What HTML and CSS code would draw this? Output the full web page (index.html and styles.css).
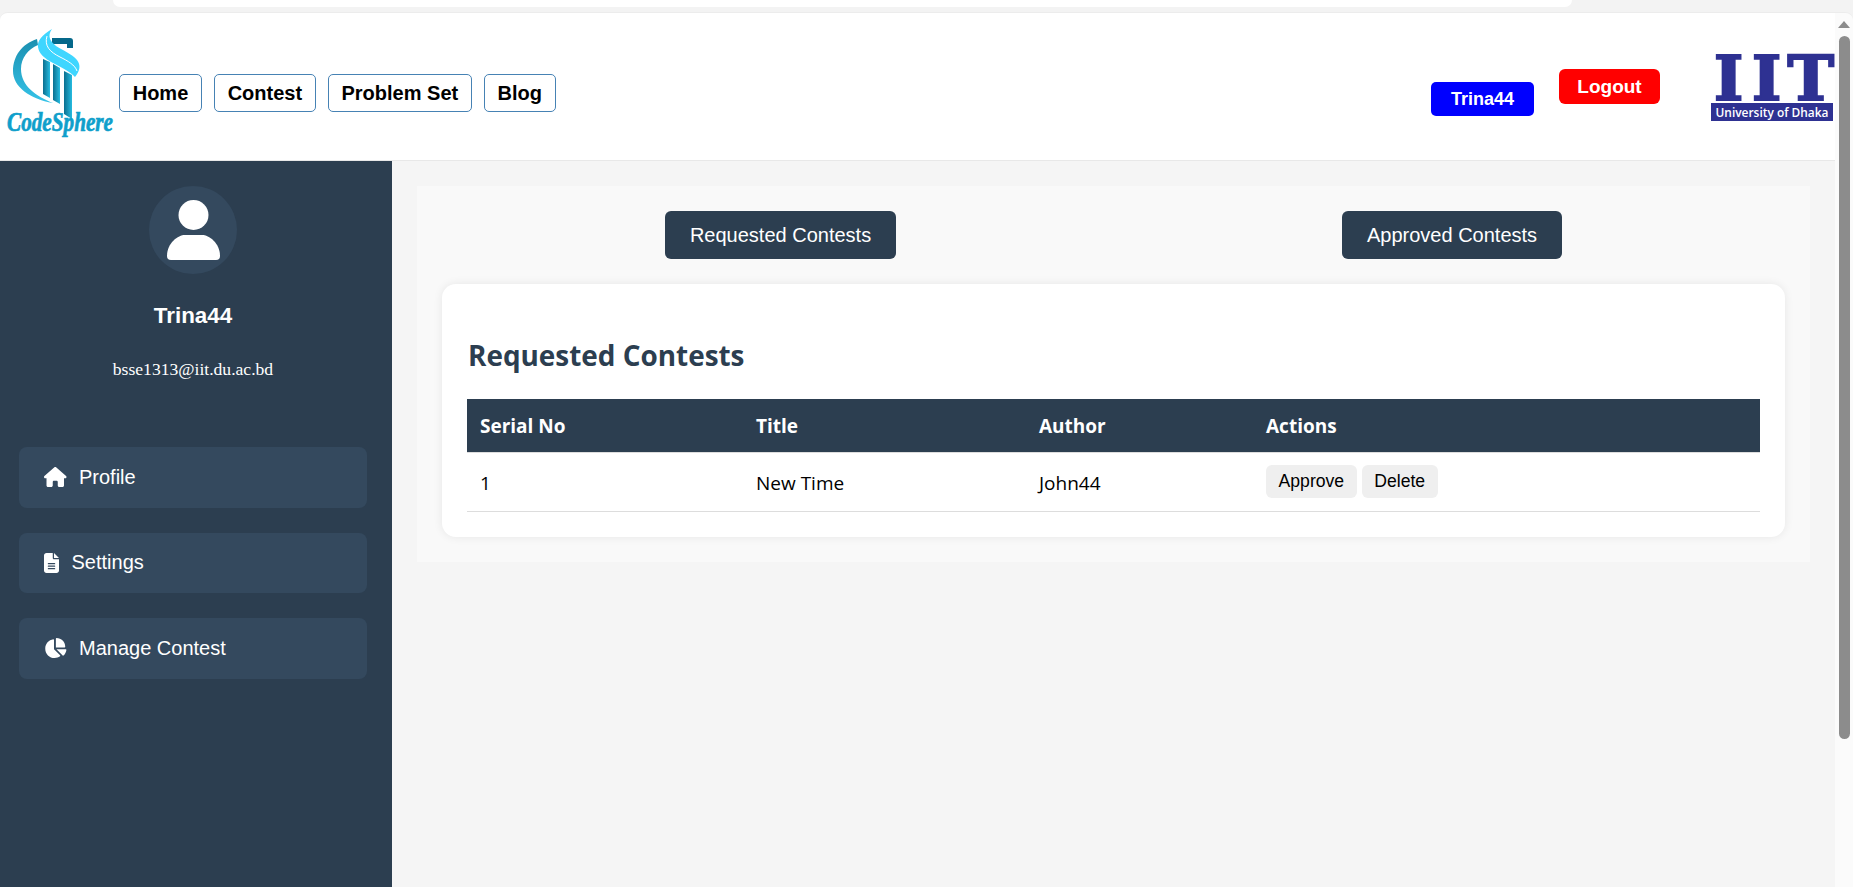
FILE: index.html
```html
<!DOCTYPE html>
<html lang="en">
<head>
    <meta charset="UTF-8">
    <meta name="viewport" content="width=device-width, initial-scale=1.0">
    <title>Manage Contest - CodeSphere</title>
    <link rel="stylesheet" href="styles.css">
</head>
<body>
    <div class="top-strip">
        <div class="top-pill"></div>
    </div>
    <div class="window">
        <div class="page">
            <header class="site-header">
                <svg class="logo" viewBox="0 0 114 125" aria-label="CodeSphere">
                    <defs>
                        <linearGradient id="ringGrad" x1="0" y1="0" x2="0" y2="1">
                            <stop offset="0" stop-color="#1b8fb0"/>
                            <stop offset="1" stop-color="#35c3e8"/>
                        </linearGradient>
                        <linearGradient id="colGrad" x1="0" y1="0" x2="1" y2="0">
                            <stop offset="0" stop-color="#0b6f8f"/>
                            <stop offset="1" stop-color="#25bbe0"/>
                        </linearGradient>
                    </defs>
                    <path fill="url(#ringGrad)" d="M37 15 C22 20 13 32 13 47 C13 63 30 75 53 79 C36 72 21 62 21 45 C21 34 28 25 38 21 Z"/>
                    <path fill="#05688a" d="M52 14 H70 Q73 14 73 17 V24 H67 V20 H52 Z"/>
                    <path fill="url(#colGrad)" d="M43 35 L50 38 V74 L43 70 Z"/>
                    <path fill="url(#colGrad)" d="M53 40 L60 44 V80 L53 76 Z"/>
                    <path fill="url(#colGrad)" d="M64 47 L72 51 V95 L64 90 Z"/>
                    <path fill="#3fd6ff" d="M52 5 C42 11 37 17 38 23 C39 30 44 34 53 39 C62 44 71 48 75 53 C80 47 81 41 77 36 C72 30 62 26 56 22 C50 17 47 12 52 5 Z"/>
                    <path fill="none" stroke="#fff" stroke-width="1" d="M47 12 C44 22 50 28 60 33 C68 37 75 41 77 47"/>
                    <text class="logo-text" x="7" y="107" textLength="106" lengthAdjust="spacingAndGlyphs">CodeSphere</text>
                </svg>
                <nav class="main-nav">
                    <a href="#">Home</a>
                    <a href="#">Contest</a>
                    <a href="#">Problem Set</a>
                    <a href="#">Blog</a>
                </nav>
                <div class="header-right">
                    <a class="user-btn" href="#">Trina44</a>
                    <a class="logout-btn" href="#">Logout</a>
                    <svg class="iit-logo" viewBox="0 0 123 68" aria-label="IIT University of Dhaka">
                        <text class="iit-text" x="3 41 76.5" y="46.5">IIT</text>
                        <rect x="0" y="50" width="122" height="18" fill="#2e3192"/>
                        <text class="iit-sub" x="61" y="63.5" text-anchor="middle" textLength="113" lengthAdjust="spacingAndGlyphs">University of Dhaka</text>
                    </svg>
                </div>
            </header>
            <div class="layout">
                <aside class="sidebar">
                    <div class="avatar">
                        <svg viewBox="0 0 53 60" width="53" height="60">
                            <circle cx="26.5" cy="15" r="15" fill="#fff"/>
                            <path fill="#fff" d="M0 56 C0 43 11 35 18 35 H35 C42 35 53 43 53 56 Q53 60 49 60 H4 Q0 60 0 56 Z"/>
                        </svg>
                    </div>
                    <h3 class="user-name">Trina44</h3>
                    <p class="user-email">bsse1313@iit.du.ac.bd</p>
                    <ul class="side-menu">
                        <li>
                            <svg class="icon" viewBox="0 0 576 512" width="22.5" height="20"><path d="M575.8 255.5c0 18-15 32.1-32 32.1h-32l.7 160.2c0 2.7-.2 5.4-.5 8.1V472c0 22.1-17.9 40-40 40H456c-1.1 0-2.2 0-3.3-.1c-1.4 .1-2.8 .1-4.2 .1H416 392c-22.1 0-40-17.9-40-40V448 384c0-17.7-14.3-32-32-32H256c-17.7 0-32 14.3-32 32v64 24c0 22.1-17.9 40-40 40H160 128.1c-1.5 0-3-.1-4.5-.2c-1.2 .1-2.4 .2-3.6 .2H104c-22.1 0-40-17.9-40-40V360c0-.9 0-1.9 .1-2.8V287.6H32c-18 0-32-14-32-32.1c0-9 3-17 10-24L266.4 8c7-7 15-8 22-8s15 2 21 7L564.8 231.5c8 7 12 15 11 24z"/></svg>
                            <span>Profile</span>
                        </li>
                        <li>
                            <svg class="icon" viewBox="0 0 384 512" width="15" height="20"><path d="M64 0C28.7 0 0 28.7 0 64V448c0 35.3 28.7 64 64 64H320c35.3 0 64-28.7 64-64V160H256c-17.7 0-32-14.3-32-32V0H64zM256 0V128H384L256 0zM112 256H272c8.8 0 16 7.2 16 16s-7.2 16-16 16H112c-8.8 0-16-7.2-16-16s7.2-16 16-16zm0 64H272c8.8 0 16 7.2 16 16s-7.2 16-16 16H112c-8.8 0-16-7.2-16-16s7.2-16 16-16zm0 64H272c8.8 0 16 7.2 16 16s-7.2 16-16 16H112c-8.8 0-16-7.2-16-16s7.2-16 16-16z"/></svg>
                            <span>Settings</span>
                        </li>
                        <li>
                            <svg class="icon" viewBox="0 0 576 512" width="22.5" height="20"><path d="M304 240V16.6c0-9 7-16.6 16-16.6C443.7 0 544 100.3 544 224c0 9-7.6 16-16.6 16H304zM32 272C32 150.7 122.1 50.3 239 34.3c9.2-1.3 17 6.1 17 15.4V288L412.5 444.5c6.7 6.7 6.2 17.7-1.5 23.1C371.8 495.6 323.8 512 272 512C139.5 512 32 404.6 32 272zm526.4 16c9.3 0 16.6 7.8 15.4 17c-7.7 55.9-34.6 105.6-73.9 142.3c-6 5.6-15.4 5.2-21.2-.7L320 288H558.4z"/></svg>
                            <span>Manage Contest</span>
                        </li>
                    </ul>
                </aside>
                <main class="content">
                    <section class="panel">
                        <div class="tabs">
                            <button class="tab-btn">Requested Contests</button>
                            <button class="tab-btn">Approved Contests</button>
                        </div>
                        <div class="card">
                            <h2>Requested Contests</h2>
                            <table class="contest-table">
                                <thead>
                                    <tr>
                                        <th class="col-serial">Serial No</th>
                                        <th class="col-title">Title</th>
                                        <th class="col-author">Author</th>
                                        <th>Actions</th>
                                    </tr>
                                </thead>
                                <tbody>
                                    <tr>
                                        <td>1</td>
                                        <td>New Time</td>
                                        <td>John44</td>
                                        <td class="actions">
                                            <button class="action-btn">Approve</button>
                                            <button class="action-btn">Delete</button>
                                        </td>
                                    </tr>
                                </tbody>
                            </table>
                        </div>
                    </section>
                </main>
            </div>
        </div>
        <div class="scrollbar">
            <span class="scroll-arrow"></span>
            <div class="scroll-thumb"></div>
        </div>
    </div>
</body>
</html>
```

FILE: styles.css
```css
* {
    box-sizing: border-box;
}
html, body {
    height: 100%;
}
body {
    margin: 0;
    background-color: #f3f3f3;
    font-family: "Liberation Sans", Arial, sans-serif;
    overflow: hidden;
    display: flex;
    flex-direction: column;
}

/* browser strip on top */
.top-strip {
    height: 12px;
    flex: none;
    padding: 0 281px 0 113px;
}
.top-pill {
    height: 7px;
    background: #fff;
    border-radius: 0 0 16px 16px;
}
.window {
    flex: 1;
    display: flex;
    min-height: 0;
    border-top: 1px solid #ececec;
    border-radius: 8px 8px 0 0;
    overflow: hidden;
    background: #f5f5f5;
}
.page {
    flex: 1;
    display: flex;
    flex-direction: column;
    min-width: 0;
}

/* header */
.site-header {
    height: 148px;
    flex: none;
    background: #fff;
    border-bottom: 1px solid #e8e8e8;
    display: flex;
    align-items: center;
    padding-right: 1px;
}
.logo {
    width: 114px;
    height: 125px;
    flex: none;
    overflow: visible;
}
.logo-text {
    font-family: "Liberation Serif", serif;
    font-style: italic;
    font-weight: bold;
    font-size: 27px;
    fill: #0f9fcb;
    stroke: #0f9fcb;
    stroke-width: 0.7px;
}
.main-nav {
    display: flex;
    gap: 12px;
    margin: 13px 0 0 5px;
}
.main-nav a {
    height: 38px;
    padding: 0 12.7px;
    display: flex;
    align-items: center;
    border: 1px solid #4682b4;
    border-radius: 5px;
    color: #000;
    font-size: 20px;
    font-weight: bold;
    text-decoration: none;
}
.header-right {
    margin-left: auto;
    display: flex;
    align-items: center;
}
.user-btn {
    width: 103px;
    height: 34px;
    margin-top: 25px;
    background: #00f;
    color: #fff;
    border-radius: 5px;
    font-size: 18px;
    font-weight: bold;
    text-decoration: none;
    display: flex;
    align-items: center;
    justify-content: center;
}
.logout-btn {
    width: 101px;
    height: 35px;
    margin-left: 25px;
    background: #f00;
    color: #fff;
    border-radius: 6px;
    font-size: 19px;
    font-weight: bold;
    text-decoration: none;
    display: flex;
    align-items: center;
    justify-content: center;
}
.iit-logo {
    width: 123px;
    height: 68px;
    margin-left: 51px;
    flex: none;
    overflow: visible;
}
.iit-text {
    font-family: "DejaVu Serif", serif;
    font-weight: bold;
    font-size: 62.5px;
    fill: #2e3192;
    stroke: #2e3192;
    stroke-width: 2.2px;
}
.iit-sub {
    font-family: "Open Sans", sans-serif;
    font-weight: 600;
    font-size: 13px;
    fill: #fff;
}

/* sidebar */
.layout {
    flex: 1;
    display: flex;
    min-height: 0;
}
.sidebar {
    width: 392px;
    flex: none;
    background: #2c3e50;
    color: #fff;
    padding: 25px 25px 0 19px;
    display: flex;
    flex-direction: column;
    align-items: center;
}
.avatar {
    width: 88px;
    height: 88px;
    border-radius: 50%;
    background: #34495e;
    display: flex;
    align-items: center;
    justify-content: center;
}
.user-name {
    margin: 29px 0 0;
    font-size: 22.4px;
    line-height: 26px;
    font-weight: bold;
}
.user-email {
    margin: 30px 0 0;
    font-family: "Liberation Serif", "Times New Roman", serif;
    font-size: 17.6px;
    line-height: 20px;
}
.side-menu {
    list-style: none;
    margin: 68px 0 0;
    padding: 0;
    width: 348px;
    display: flex;
    flex-direction: column;
    gap: 25px;
}
.side-menu li {
    height: 60.5px;
    background: #34495e;
    border-radius: 8px;
    padding-left: 25px;
    display: flex;
    align-items: center;
    gap: 12.5px;
    font-size: 20px;
}
.icon {
    fill: #fff;
    flex: none;
}

/* main content */
.content {
    flex: 1;
    min-width: 0;
    padding: 25px 25px 0;
}
.panel {
    background: #f9f9f9;
    padding: 25px;
}
.tabs {
    display: flex;
    justify-content: space-around;
    margin-bottom: 25px;
}
.tab-btn {
    height: 48px;
    padding: 0 25px;
    background: #2c3e50;
    color: #fff;
    border: none;
    border-radius: 6px;
    font-family: inherit;
    font-size: 20px;
}
.card {
    background: #fff;
    border-radius: 14px;
    padding: 25px;
    box-shadow: 0 0 10px rgba(0, 0, 0, 0.08);
}
.card h2 {
    margin: 27px 0 25px 1px;
    color: #2c3e50;
    font-family: "Open Sans", sans-serif;
    font-size: 27.9px;
    line-height: 38px;
    font-weight: 700;
}
.contest-table {
    width: 100%;
    border-collapse: collapse;
    font-family: "Open Sans", sans-serif;
    font-size: 19px;
}
.contest-table th {
    height: 53px;
    padding: 2px 13px 0;
    background: #2c3e50;
    color: #fff;
    text-align: left;
    font-weight: 700;
    border-bottom: 1px solid #ddd;
}
.contest-table td {
    height: 59px;
    padding: 2px 13px 0;
    border-bottom: 1px solid #ddd;
}
.col-serial {
    width: 276px;
}
.col-title {
    width: 283px;
}
.col-author {
    width: 227px;
}
.contest-table td.actions {
    vertical-align: top;
    padding-top: 12px;
}
.action-btn {
    height: 33px;
    padding: 0 12.6px;
    background: #efefef;
    border: none;
    border-radius: 6px;
    color: #000;
    font-family: "Liberation Sans", sans-serif;
    font-size: 17.6px;
}

/* scrollbar */
.scrollbar {
    width: 18px;
    flex: none;
    background: #fbfbfb;
    display: flex;
    flex-direction: column;
    align-items: center;
    padding-top: 8px;
}
.scroll-arrow {
    width: 0;
    height: 0;
    border-left: 6.5px solid transparent;
    border-right: 6.5px solid transparent;
    border-bottom: 7px solid #8c8c8c;
}
.scroll-thumb {
    width: 11px;
    height: 703px;
    margin-top: 8px;
    background: #8c8c8c;
    border-radius: 6px;
}
```
